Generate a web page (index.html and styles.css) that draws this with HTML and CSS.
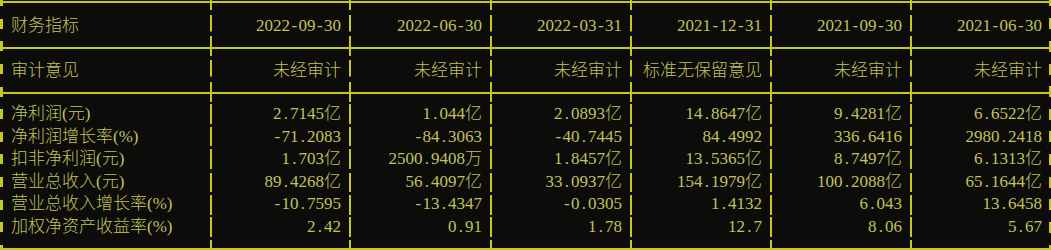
FILE: index.html
```html
<!DOCTYPE html>
<html lang="zh-CN">
<head>
<meta charset="utf-8">
<title>财务指标</title>
<link rel="stylesheet" href="styles.css">
</head>
<body>
<div class="table">
  <div class="row rule top"><div class="c c0"></div><div class="c"></div><div class="c"></div><div class="c"></div><div class="c"></div><div class="c"></div><div class="c cl"></div></div>
  <div class="row head"><div class="c c0">财务指标</div><div class="c">2022<i>-</i>09<i>-</i>30</div><div class="c">2022<i>-</i>06<i>-</i>30</div><div class="c">2022<i>-</i>03<i>-</i>31</div><div class="c">2021<i>-</i>12<i>-</i>31</div><div class="c">2021<i>-</i>09<i>-</i>30</div><div class="c cl">2021<i>-</i>06<i>-</i>30</div></div>
  <div class="row rule mid"><div class="c c0"></div><div class="c"></div><div class="c"></div><div class="c"></div><div class="c"></div><div class="c"></div><div class="c cl"></div></div>
  <div class="row head"><div class="c c0">审计意见</div><div class="c">未经审计</div><div class="c">未经审计</div><div class="c">未经审计</div><div class="c">标准无保留意见</div><div class="c">未经审计</div><div class="c cl">未经审计</div></div>
  <div class="row rule mid"><div class="c c0"></div><div class="c"></div><div class="c"></div><div class="c"></div><div class="c"></div><div class="c"></div><div class="c cl"></div></div>
  <div class="row"><div class="c c0">净利润(元)</div><div class="c">2<i>.</i>7145亿</div><div class="c">1<i>.</i>044亿</div><div class="c">2<i>.</i>0893亿</div><div class="c">14<i>.</i>8647亿</div><div class="c">9<i>.</i>4281亿</div><div class="c cl">6<i>.</i>6522亿</div></div>
  <div class="row"><div class="c c0">净利润增长率(%)</div><div class="c"><i>-</i>71<i>.</i>2083</div><div class="c"><i>-</i>84<i>.</i>3063</div><div class="c"><i>-</i>40<i>.</i>7445</div><div class="c">84<i>.</i>4992</div><div class="c">336<i>.</i>6416</div><div class="c cl">2980<i>.</i>2418</div></div>
  <div class="row"><div class="c c0">扣非净利润(元)</div><div class="c">1<i>.</i>703亿</div><div class="c">2500<i>.</i>9408万</div><div class="c">1<i>.</i>8457亿</div><div class="c">13<i>.</i>5365亿</div><div class="c">8<i>.</i>7497亿</div><div class="c cl">6<i>.</i>1313亿</div></div>
  <div class="row"><div class="c c0">营业总收入(元)</div><div class="c">89<i>.</i>4268亿</div><div class="c">56<i>.</i>4097亿</div><div class="c">33<i>.</i>0937亿</div><div class="c">154<i>.</i>1979亿</div><div class="c">100<i>.</i>2088亿</div><div class="c cl">65<i>.</i>1644亿</div></div>
  <div class="row"><div class="c c0">营业总收入增长率(%)</div><div class="c"><i>-</i>10<i>.</i>7595</div><div class="c"><i>-</i>13<i>.</i>4347</div><div class="c"><i>-</i>0<i>.</i>0305</div><div class="c">1<i>.</i>4132</div><div class="c">6<i>.</i>043</div><div class="c cl">13<i>.</i>6458</div></div>
  <div class="row"><div class="c c0">加权净资产收益率(%)</div><div class="c">2<i>.</i>42</div><div class="c">0<i>.</i>91</div><div class="c">1<i>.</i>78</div><div class="c">12<i>.</i>7</div><div class="c">8<i>.</i>06</div><div class="c cl">5<i>.</i>67</div></div>
  <div class="row rule bottom"><div class="c c0"></div><div class="c"></div><div class="c"></div><div class="c"></div><div class="c"></div><div class="c"></div><div class="c cl"></div></div>
</div>
</body>
</html>
```

FILE: styles.css
```css
:root {
  --ln: #c6c81e;
  --tx: #c2c25a;
  --bg: #0c0c0a;
}
html, body {
  margin: 0;
  padding: 0;
  background: var(--bg);
  overflow: hidden;
}
.table {
  width: 1051px;
  display: flex;
  flex-direction: column;
  font-family: "Liberation Serif", "Noto Sans CJK SC", serif;
  font-size: 17px;
  font-weight: 300;
  color: var(--tx);
}
.row {
  display: flex;
  height: 22.6px;
  line-height: 22.6px;
  white-space: nowrap;
}
.row.head {
  box-sizing: border-box;
  padding-top: 2px;
}
.row.head .c {
  background-position: right 0 top -0.5px;
}
.row.head .c0 {
  background-position: left 0 top 4.3px, right 0 top -0.5px;
}
.row.head .cl {
  background-position: right 0 top 3.8px;
}
.c i {
  font-style: normal;
  display: inline-block;
  width: 8.5px;
  text-align: center;
}
.c {
  box-sizing: border-box;
  width: 140px;
  flex: none;
  text-align: right;
  padding-right: 10px;
  background-image: linear-gradient(var(--ln), var(--ln));
  background-repeat: no-repeat;
  background-size: 2px calc(100% - 3px);
  background-position: right 0 center;
}
.c:nth-child(2) { width: 139px; }
.c:nth-child(3) { width: 141px; }
.c0 {
  width: 212px;
  text-align: left;
  padding-left: 11px;
  background-image: linear-gradient(var(--ln), var(--ln)), linear-gradient(var(--ln), var(--ln));
  background-size: 3px 10px, 2px calc(100% - 3px);
  background-position: left 0 center, right 0 center;
}
.cl {
  width: 140px;
  background-size: 3px 11px;
  background-position: right 0 center;
}
.rule {
  background-image: linear-gradient(var(--ln), var(--ln));
  background-repeat: no-repeat;
  background-size: 100% 2px;
}
.rule.top {
  height: 12.6px;
  background-position: 0 1px;
}
.rule.top .c {
  background-size: 2px 10px;
  background-position: right 0 top 0;
}
.rule.top .c0 {
  background-size: 3px 6px, 2px 10px;
  background-position: left 0 top 0, right 0 top 0;
}
.rule.top .cl {
  background-size: 3px 6px;
  background-position: right 0 top 0;
}
.rule.mid {
  background-position: 0 11.5px;
}
.rule.bottom {
  height: 12px;
  background-position: 0 9.5px;
}
.rule.bottom .c {
  background-position: right 0 top 1.5px;
  background-size: 2px 20px;
}
.rule.bottom .c0 {
  background-size: 3px 10px, 2px 20px;
  background-position: left 0 top 6px, right 0 top 1.5px;
}
.rule.bottom .cl {
  background-size: 3px 10px;
  background-position: right 0 top 6px;
}
```
